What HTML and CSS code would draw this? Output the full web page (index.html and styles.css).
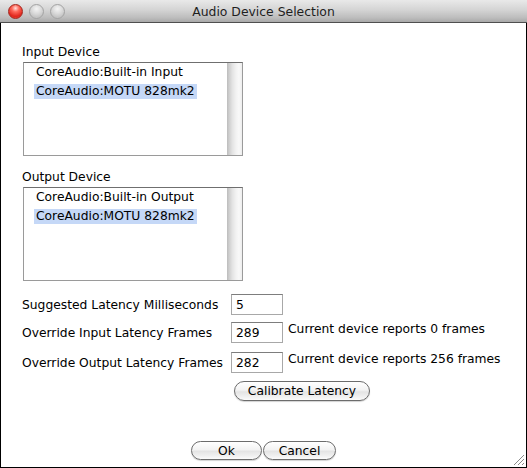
FILE: index.html
```html
<!DOCTYPE html>
<html>
<head>
<meta charset="utf-8">
<title>Audio Device Selection</title>
<link rel="stylesheet" href="styles.css">
</head>
<body>
<div class="window">
  <div class="titlebar">
    <div class="lights">
      <span class="light close"></span>
      <span class="light"></span>
      <span class="light"></span>
    </div>
    <div class="title">Audio Device Selection</div>
    <div></div>
  </div>
  <div class="content">
    <div class="group-label first">Input Device</div>
    <div class="listbox">
      <div class="items">
        <div class="item">CoreAudio:Built-in Input</div>
        <div class="item selected">CoreAudio:MOTU 828mk2</div>
      </div>
      <div class="scrollbar"></div>
    </div>

    <div class="group-label second">Output Device</div>
    <div class="listbox">
      <div class="items">
        <div class="item">CoreAudio:Built-in Output</div>
        <div class="item selected">CoreAudio:MOTU 828mk2</div>
      </div>
      <div class="scrollbar"></div>
    </div>

    <div class="row row1">
      <label class="row-label">Suggested Latency Milliseconds</label>
      <input class="field" type="text" value="5">
    </div>
    <div class="row row2">
      <label class="row-label">Override Input Latency Frames</label>
      <input class="field" type="text" value="289">
      <span class="note">Current device reports 0 frames</span>
    </div>
    <div class="row row3">
      <label class="row-label">Override Output Latency Frames</label>
      <input class="field" type="text" value="282">
      <span class="note">Current device reports 256 frames</span>
    </div>

    <button class="aqua calibrate">Calibrate Latency</button>

    <div class="actions">
      <button class="aqua ok">Ok</button>
      <button class="aqua cancel">Cancel</button>
    </div>

    <svg class="grip" width="12" height="12" viewBox="0 0 12 12">
      <path d="M11 1 L1 11 M11 5 L5 11 M11 9 L9 11" stroke="#8a8a8a" stroke-width="1"/>
      <path d="M12 2 L2 12 M12 6 L6 12" stroke="#ffffff" stroke-width="1"/>
    </svg>
  </div>
</div>
</body>
</html>
```
FILE: styles.css
```css
* { box-sizing: border-box; }
html, body { margin: 0; padding: 0; background: #fff; }
body {
  font-family: "DejaVu Sans", "Liberation Sans", sans-serif;
  font-size: 12.3px;
  color: #000;
}
.window {
  width: 527px;
  height: 468px;
  display: flex;
  flex-direction: column;
}
.titlebar {
  height: 23px;
  flex: none;
  display: grid;
  grid-template-columns: 1fr auto 1fr;
  align-items: center;
  background: linear-gradient(#e9e9e9, #d4d4d4 45%, #bdbdbd 80%, #a9a9a9);
  border-bottom: 1px solid #4f4f4f;
}
.lights {
  display: flex;
  gap: 6px;
  padding-left: 8px;
  align-self: start;
  padding-top: 4px;
}
.light {
  width: 15px;
  height: 15px;
  border-radius: 50%;
  border: 1px solid #a3a3a3;
  background: radial-gradient(circle at 50% 30%, #f4f4f4 0, #dcdcdc 40%, #c4c4c4 75%, #d6d6d6 100%);
}
.light.close {
  border-color: #a3251c;
  background: radial-gradient(circle at 50% 25%, #ffe0dc 0, #ff6a5c 30%, #e0261d 70%, #f75a4a 100%);
}
.title {
  font-size: 12.4px;
  color: #1e1e1e;
  padding-top: 1px;
}
.content {
  flex: 1;
  position: relative;
  border-left: 1px solid #000;
  border-right: 1px solid #000;
  border-bottom: 1px solid #000;
  padding: 21px 0 0 21px;
  display: flex;
  flex-direction: column;
  align-items: flex-start;
}
.group-label {
  line-height: 16px;
  margin-bottom: 2px;
}
.group-label.second { margin-top: 13px; }
.listbox {
  width: 220px;
  height: 94px;
  margin-left: 1px;
  display: flex;
  border: 1px solid #9a9a9a;
  border-top-color: #6f6f6f;
  background: #fff;
}
.items {
  flex: 1;
  padding: 2px 0 0 10px;
}
.item {
  width: fit-content;
  line-height: 15px;
  height: 15px;
  padding: 0 2px;
  margin-bottom: 4px;
  white-space: nowrap;
}
.item.selected { background: #c5d8f7; }
.scrollbar {
  width: 15px;
  background: linear-gradient(to right, #bcbcbc, #cfcfcf 15%, #e3e3e3 35%, #f2f2f2 60%, #f9f9f9 80%, #ededed);
}
.row {
  display: flex;
  align-items: flex-start;
  height: 21px;
}
.row1 { margin-top: 13px; }
.row2 { margin-top: 7px; }
.row3 { margin-top: 9px; }
.row-label {
  width: 209px;
  line-height: 16px;
  margin-top: 3px;
  white-space: nowrap;
}
.field {
  width: 52px;
  height: 21px;
  margin: 0;
  padding: 0 4px;
  border: 1px solid #a8a8a8;
  border-top-color: #7d7d7d;
  font: inherit;
  color: #000;
  background: #fff;
  outline: none;
}
.note {
  margin-left: 5px;
  line-height: 16px;
  margin-top: -1px;
  white-space: nowrap;
}
.aqua {
  font: inherit;
  color: #000;
  border: 1px solid #6c6c6c;
  border-radius: 10px;
  background: linear-gradient(#ffffff, #f3f3f3 45%, #e4e4e4 55%, #f2f2f2 85%, #fbfbfb);
  box-shadow: 0 1px 1px rgba(0, 0, 0, 0.18);
  padding: 0;
  line-height: 16px;
}
.calibrate {
  margin-top: 8px;
  margin-left: 212px;
  width: 136px;
  height: 20px;
}
.actions {
  margin-top: 40px;
  align-self: stretch;
  display: flex;
  justify-content: center;
  gap: 1px;
  padding-right: 21px;
}
.ok { width: 71px; height: 19px; }
.cancel { width: 73px; height: 19px; }
.grip {
  position: absolute;
  right: 1px;
  bottom: 1px;
}
```
